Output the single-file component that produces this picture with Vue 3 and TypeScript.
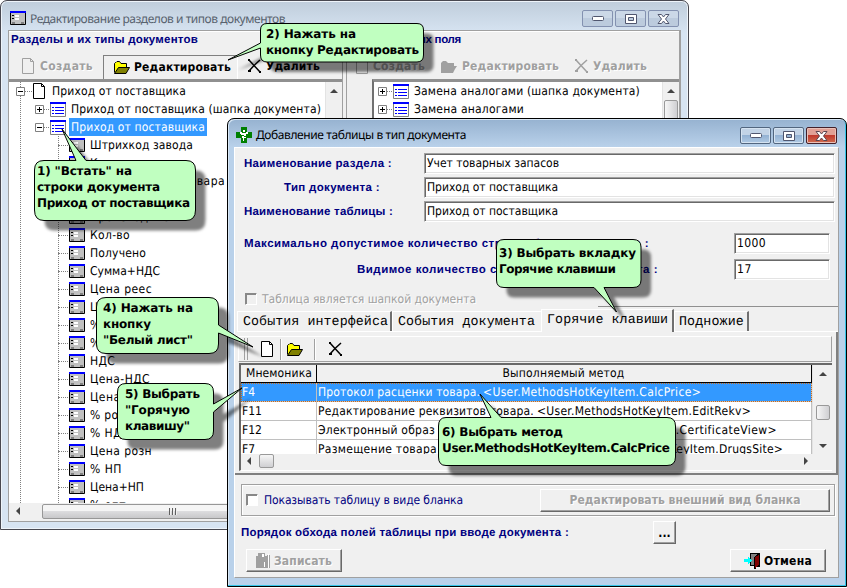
<script setup lang="ts">
interface TreeNode {
  text: string;
  level: number;
  icon: "page" | "list" | "form";
  width: number;
  sign?: "plus" | "minus";
  selected?: boolean;
}

interface CalloutLine {
  text: string;
  x: number;
  y: number;
  width: number;
}

interface Callout {
  path: string;
  lines: CalloutLine[];
}

// stretches a label to the given width with letter spacing
const vFit = {
  mounted(el: HTMLElement, { value }: { value: number }) {
    if (!value) return;
    const width = el.getBoundingClientRect().width;
    const count = (el.textContent || "").length;
    el.style.letterSpacing = `${(value - width) / count}px`;
  },
};

const leaf = (text: string, width: number): TreeNode => ({ text, width, level: 2, icon: "form" });

const tree: TreeNode[] = [
  { text: "Приход от поставщика", level: 0, icon: "page", width: 134, sign: "minus" },
  { text: "Приход от поставщика (шапка документа)", level: 1, icon: "list", width: 250, sign: "plus" },
  { text: "Приход от поставщика", level: 1, icon: "list", width: 134, sign: "minus", selected: true },
  leaf("Штрихкод завода", 103),
  leaf("Код товара", 66),
  leaf("Наименование товара", 135),
  leaf("Серия", 38),
  leaf("Производитель", 94),
  leaf("Кол-во", 40),
  leaf("Получено", 56),
  leaf("Сумма+НДС", 70),
  leaf("Цена реес", 62),
  leaf("Цена изг", 54),
  leaf("% изг", 34),
  leaf("% пост", 40),
  leaf("НДС", 25),
  leaf("Цена-НДС", 60),
  leaf("Цена опт", 56),
  leaf("% розн", 42),
  leaf("% НДС", 40),
  leaf("Цена розн", 62),
  leaf("% НП", 32),
  leaf("Цена+НП", 54),
  leaf("% опт", 36),
];

const fieldTree = [
  { text: "Замена аналогами (шапка документа)", width: 226 },
  { text: "Замена аналогами", width: 110 },
];

const fields = [
  { label: "Наименование раздела :", width: 148, value: "Учет товарных запасов", valueWidth: 132 },
  { label: "Тип документа :", width: 96, value: "Приход от поставщика", valueWidth: 131, indent: true },
  { label: "Наименование таблицы :", width: 149, value: "Приход от поставщика", valueWidth: 131 },
];

const methods = [
  { key: "F4", name: "Протокол расценки товара.", nameWidth: 162, tail: "<User.MethodsHotKeyItem.CalcPrice>", tailWidth: 218, end: 700, active: true },
  { key: "F11", name: "Редактирование реквизитов товара.", nameWidth: 216, tail: "<User.MethodsHotKeyItem.EditRekv>", tailWidth: 214, end: 750 },
  { key: "F12", name: "Электронный образ", nameWidth: 117, tail: "<User.MethodsHotKeyItem.CertificateView>", tailWidth: 256, end: 776 },
  { key: "F7", name: "Размещение товара", nameWidth: 119, tail: "<User.MethodsHotKeyItem.DrugsSite>", tailWidth: 218, end: 782 },
];

const callouts: Callout[] = [
  {
    path: "M44 160.500H76L62 129L86 160.500H186Q195.500 160.500 195.500 170V210Q195.500 220.500 186 220.500H44Q34.500 220.500 34.500 210V170Q34.500 160.500 44 160.500Z",
    lines: [
      { text: '1) "Встать" на', x: 37, y: 175, width: 95 },
      { text: "строки документа", x: 37, y: 191, width: 123 },
      { text: "Приход от поставщика", x: 37, y: 207, width: 153 },
    ],
  },
  {
    path: "M267 23.500H417Q423.500 23.500 423.500 30V55Q423.500 62 417 62H267Q260.500 62 260.500 55V48L228 60L260.500 43V30Q260.500 23.500 267 23.500Z",
    lines: [
      { text: "2) Нажать на", x: 266, y: 38, width: 90 },
      { text: "кнопку Редактировать", x: 266, y: 54, width: 153 },
    ],
  },
  {
    path: "M504 239.500H633Q641 239.500 641 247V280Q641 287.500 633 287.500H604L616.500 312L594 287.500H504Q496.500 287.500 496.500 280V247Q496.500 239.500 504 239.500Z",
    lines: [
      { text: "3) Выбрать вкладку", x: 499, y: 257, width: 137 },
      { text: "Горячие клавиши", x: 499, y: 273, width: 117 },
    ],
  },
  {
    path: "M106 297.500H209Q218.500 297.500 218.500 307V325L253 347L218.500 333V344Q218.500 353.500 209 353.500H106Q96.500 353.500 96.500 344V307Q96.500 297.500 106 297.500Z",
    lines: [
      { text: "4) Нажать на", x: 103, y: 312, width: 90 },
      { text: "кнопку", x: 103, y: 328, width: 48 },
      { text: '"Белый лист"', x: 103, y: 344, width: 90 },
    ],
  },
  {
    path: "M126 383.500H205Q213.500 383.500 213.500 392V404L242 388L213.500 412V431Q213.500 439.500 205 439.500H126Q117.500 439.500 117.500 431V392Q117.500 383.500 126 383.500Z",
    lines: [
      { text: "5) Выбрать", x: 125, y: 398, width: 75 },
      { text: '"Горячую', x: 125, y: 414, width: 65 },
      { text: 'клавишу"', x: 125, y: 430, width: 65 },
    ],
  },
  {
    path: "M446 417.500H491L480 394L501 417.500H667Q675.500 417.500 675.500 426V457Q675.500 465.500 667 465.500H446Q438.500 465.500 438.500 457V426Q438.500 417.500 446 417.500Z",
    lines: [
      { text: "6) Выбрать метод", x: 442, y: 436, width: 121 },
      { text: "User.MethodsHotKeyItem.CalcPrice", x: 442, y: 452, width: 228 },
    ],
  },
];
</script>

<template>
  <div class="desktop">
    <svg class="symbols" width="0" height="0" shape-rendering="crispEdges">
      <symbol id="page" viewBox="0 0 12 16">
        <path d="M.5.500H8.500L11.500 3.500V15.500H.5Z" fill="#fff" stroke="#000" />
        <path d="M8.500.5V3.500H11.500" fill="none" stroke="#000" />
      </symbol>
      <symbol id="page-off" viewBox="0 0 12 16">
        <path d="M.5.500H8.500L11.500 3.500V15.500H.5Z" fill="none" stroke="#a0a0a0" />
        <path d="M8.500.5V3.500H11.500" fill="none" stroke="#a0a0a0" />
      </symbol>
      <symbol id="folder" viewBox="0 0 16 13">
        <path d="M.5 11.500V2.500L1.500 1.500H2L3 .5H5.500L7 2.500H12.500V6" fill="#ff0" stroke="#000" />
        <path d="M.5 12.500L4.500 6.500H15.500L12 12.500Z" fill="#808000" stroke="#000" />
      </symbol>
      <symbol id="folder-off" viewBox="0 0 16 13">
        <path d="M0 12V3L2 1H5L7 3H13V6H16L14 9L12 13H0Z" fill="#a0a0a0" />
      </symbol>
      <symbol id="cross" viewBox="0 0 13 14">
        <path d="M1 1L6 6.500L12 13M12 1L6 6.500L1 12" fill="none" stroke="currentColor" stroke-width="1.500" shape-rendering="auto" />
        <path d="M0 11H3V13H0ZM0 0H2V2H0ZM11 12H13V14H11Z" fill="currentColor" />
      </symbol>
      <symbol id="list" viewBox="0 0 16 15">
        <path d="M.5.500H15.500V14.500H.5Z" fill="#fff" stroke="#808080" />
        <path d="M0 0H16V2H0ZM2 5H4V6H2ZM5 5H14V6H5ZM2 8H4V9H2ZM5 8H14V9H5ZM2 11H4V12H2ZM5 11H14V12H5Z" fill="#00f" />
      </symbol>
      <symbol id="form" viewBox="0 0 16 14">
        <path d="M.5.500H15.500V13.500H.5Z" fill="#c0c0c0" stroke="#000" />
        <path d="M0 0H16V2H0Z" fill="#00f" />
        <path d="M2 4H4V5H2ZM2 7H4V8H2Z" fill="#000" />
        <path d="M5 4H9V6H5ZM5 7H9V9H5Z" fill="#fff" />
        <path d="M2 11H5V13H2ZM11 11H14V13H11Z" fill="#808080" />
      </symbol>
      <symbol id="plus" viewBox="0 0 9 9">
        <path d="M.5.500H8.500V8.500H.5Z" fill="#fff" stroke="#808080" />
        <path d="M2 4H7V5H2ZM4 2H5V7H4Z" fill="#000" />
      </symbol>
      <symbol id="minus" viewBox="0 0 9 9">
        <path d="M.5.500H8.500V8.500H.5Z" fill="#fff" stroke="#808080" />
        <path d="M2 4H7V5H2Z" fill="#000" />
      </symbol>
    </svg>

    <section class="window back">
      <header class="titlebar">
        <svg class="title-icon" width="16" height="14"><use href="#form" /></svg>
        <span v-fit="255" class="title">Редактирование разделов и типов документов</span>
        <div class="controls">
          <i><svg width="12" height="6"><rect x=".5" y=".5" width="11" height="4" rx="1" fill="#fff" stroke="#50566e" /></svg></i>
          <i><svg width="12" height="10"><path d="M.5.500H11.500V9.500H.5ZM3.500 3.500V6.500H8.500V3.500Z" fill="#fff" fill-rule="evenodd" stroke="#50566e" /></svg></i>
          <i><svg width="13" height="10"><path d="M1 .5H4.500L6.500 3L8.500.5H12L8.500 5L12 9.500H8.500L6.500 7L4.500 9.500H1L4.500 5Z" fill="#fff" stroke="#50566e" /></svg></i>
        </div>
      </header>
      <div class="sections">
        <div class="pane">
          <div class="pane-title"><span v-fit="187">Разделы и их типы документов</span></div>
          <div class="toolbar">
            <span class="tool off">
              <svg width="12" height="16"><use href="#page-off" /></svg>
              <b v-fit="53">Создать</b>
            </span>
            <span class="tool pressed">
              <svg width="16" height="13"><use href="#folder" /></svg>
              <b v-fit="97">Редактировать</b>
            </span>
            <span class="tool remove">
              <svg width="13" height="14"><use href="#cross" /></svg>
              <b v-fit="54">Удалить</b>
            </span>
          </div>
          <div class="tree-box">
            <div class="tree">
              <div v-for="(node, index) in tree" :key="index" class="node" :class="['level-' + node.level]">
                <svg v-if="node.sign" class="sign" width="9" height="9"><use :href="'#' + node.sign" /></svg>
                <span class="branch"></span>
                <svg v-if="node.icon === 'page'" width="12" height="16"><use href="#page" /></svg>
                <svg v-else-if="node.icon === 'list'" width="16" height="15"><use href="#list" /></svg>
                <svg v-else width="16" height="14"><use href="#form" /></svg>
                <span class="node-text" :class="{ selected: node.selected }"><span v-fit="node.width">{{ node.text }}</span></span>
              </div>
            </div>
            <div class="vscroll"><span class="arrow-up"></span></div>
          </div>
          <div class="hscroll">
            <span class="arrow-left"></span>
            <span class="thumb"><i></i><i></i><i></i></span>
          </div>
        </div>
        <div class="pane right">
          <div class="pane-title"><span v-fit="111">Элементы и их поля</span></div>
          <div class="toolbar">
            <span class="tool off">
              <svg width="12" height="16"><use href="#page-off" /></svg>
              <b v-fit="52">Создать</b>
            </span>
            <span class="tool off">
              <svg width="16" height="13"><use href="#folder-off" /></svg>
              <b v-fit="97">Редактировать</b>
            </span>
            <span class="tool off">
              <svg width="13" height="14"><use href="#cross" /></svg>
              <b v-fit="54">Удалить</b>
            </span>
          </div>
          <div class="tree-box">
            <div class="tree">
              <div v-for="node in fieldTree" :key="node.text" class="node">
                <svg class="sign" width="9" height="9"><use href="#plus" /></svg>
                <span class="branch"></span>
                <svg width="16" height="15"><use href="#list" /></svg>
                <span class="node-text"><span v-fit="node.width">{{ node.text }}</span></span>
              </div>
            </div>
            <div class="vscroll"><span class="arrow-up"></span><span class="vthumb"></span></div>
          </div>
        </div>
      </div>
    </section>

    <section class="window front">
      <header class="titlebar">
        <svg class="title-icon" width="16" height="16" shape-rendering="crispEdges">
          <path d="M5 0H11V5H16V11H11V16H5V11H0V5H5Z" fill="#008000" />
          <path d="M4 5H6V6H10V5H12V7H10V9H8V10H10V11H8V14H7V11H6V9H8V8H5V7H4ZM7 3H9V5H7Z" fill="#fff" />
        </svg>
        <span v-fit="210" class="title">Добавление таблицы в тип документа</span>
        <div class="controls">
          <i><svg width="12" height="6"><rect x=".5" y=".5" width="11" height="4" rx="1" fill="#fff" stroke="#50566e" /></svg></i>
          <i><svg width="12" height="10"><path d="M.5.500H11.500V9.500H.5ZM3.500 3.500V6.500H8.500V3.500Z" fill="#fff" fill-rule="evenodd" stroke="#50566e" /></svg></i>
          <i class="close"><svg width="13" height="10"><path d="M1 .5H4.500L6.500 3L8.500.5H12L8.500 5L12 9.500H8.500L6.500 7L4.500 9.500H1L4.500 5Z" fill="#fff" stroke="#5c4650" /></svg></i>
        </div>
      </header>
      <div class="form">
        <div v-for="field in fields" :key="field.label" class="field">
          <label :class="{ indent: field.indent }"><span v-fit="field.width">{{ field.label }}</span></label>
          <div class="input"><span v-fit="field.valueWidth">{{ field.value }}</span></div>
        </div>
        <div class="field count">
          <label><span v-fit="405">Максимально допустимое количество строк таблицы документа :</span></label>
          <div class="input"><span v-fit="29">1000</span></div>
        </div>
        <div class="field visible-count">
          <label><span v-fit="301">Видимое количество строк таблицы документа :</span></label>
          <div class="input"><span v-fit="15">17</span></div>
        </div>
        <div class="head-check">
          <span class="checkbox"></span>
          <span v-fit="214">Таблица является шапкой документа</span>
        </div>

        <div class="tabs">
          <span class="tab"><span v-fit="145">События интерфейса</span></span>
          <span class="tab second"><span v-fit="137">События документа</span></span>
          <span class="tab current"><span v-fit="121">Горячие клавиши</span></span>
          <span class="tab last"><span v-fit="65">Подножие</span></span>
        </div>
        <div class="tab-page">
          <div class="page-tools">
            <i class="grip"></i>
            <svg width="12" height="16"><use href="#page" /></svg>
            <i class="divider"></i>
            <svg width="16" height="13"><use href="#folder" /></svg>
            <i class="divider wide"></i>
            <svg width="13" height="14"><use href="#cross" /></svg>
          </div>
          <div class="grid-box">
            <div class="grid">
              <div class="grid-row grid-head">
                <div class="key"><span v-fit="66">Мнемоника</span></div>
                <div class="method"><span v-fit="122">Выполняемый метод</span></div>
              </div>
              <div v-for="row in methods" :key="row.key" class="grid-row" :class="{ active: row.active }">
                <div class="key">{{ row.key }}</div>
                <div class="method" :style="{ paddingRight: 810 - row.end + 'px' }">
                  <span v-fit="row.nameWidth">{{ row.name }}</span>
                  <span v-fit="row.tailWidth">{{ row.tail }}</span>
                </div>
              </div>
            </div>
            <div class="vscroll grid-scroll">
              <span class="arrow-up"></span>
              <span class="vthumb"></span>
              <span class="arrow-down"></span>
            </div>
          </div>
          <div class="grid-hscroll">
            <span class="arrow-left"></span>
            <span class="hthumb"></span>
            <span class="arrow-right"></span>
          </div>
        </div>

        <div class="blank-group">
          <span class="checkbox"></span>
          <span v-fit="199" class="blank-label">Показывать таблицу в виде бланка</span>
          <button class="btn off"><b v-fit="231">Редактировать внешний вид бланка</b></button>
        </div>
        <div class="order">
          <span v-fit="328">Порядок обхода полей таблицы при вводе документа :</span>
          <button class="btn"><b>...</b></button>
        </div>
        <div class="actions">
          <button class="btn off save">
            <svg width="14" height="15" shape-rendering="crispEdges">
              <path d="M0 3H2V0H9V3H11V15H0Z" fill="#a0a0a0" />
              <path d="M6 1H8V4H6ZM8 9H9V14H8ZM12 1H13V15H12Z" fill="#fff" />
              <path d="M11 2H12V15H11ZM13 2H14V15H13Z" fill="#a0a0a0" />
            </svg>
            <b v-fit="58">Записать</b>
          </button>
          <button class="btn cancel">
            <svg width="16" height="16" shape-rendering="crispEdges">
              <path d="M6 0H16V14H12V16H10V13H6Z" fill="#000" />
              <path d="M7 1H14L10 4V12H7Z" fill="#808080" />
              <path d="M11 4L15 2V12L11 15Z" fill="#800000" />
              <path d="M0 6H4V4L8 8L4 11V9H0Z" fill="#0ff" />
            </svg>
            <b v-fit="48">Отмена</b>
          </button>
        </div>
      </div>
    </section>

    <svg class="callouts" width="847" height="588">
      <defs>
        <filter id="soft" x="-20%" y="-20%" width="140%" height="140%">
          <feGaussianBlur stdDeviation="1.600" />
        </filter>
      </defs>
      <g v-for="(callout, index) in callouts" :key="index">
        <path :d="callout.path" transform="translate(10 10)" fill="#000" fill-opacity=".5" filter="url(#soft)" />
        <path :d="callout.path" fill="#c0ffc0" stroke="#000" />
        <text
          v-for="line in callout.lines"
          :key="line.text"
          :x="line.x"
          :y="line.y"
          :textLength="line.width"
        >{{ line.text }}</text>
      </g>
    </svg>
  </div>
</template>

<style>
body {
  margin: 0;
  background: #fff;
}
</style>

<style scoped>
.desktop {
  position: relative;
  width: 847px;
  height: 588px;
  overflow: hidden;
  font: 12px/16px "DejaVu Sans Condensed", "DejaVu Sans", sans-serif;
  color: #000;
  white-space: nowrap;
  text-rendering: geometricPrecision;
}

.desktop * {
  box-sizing: border-box;
}

.desktop span,
.desktop svg,
.desktop i,
.desktop b {
  flex: none;
}

.symbols,
.callouts {
  position: absolute;
  top: 0;
  left: 0;
}

.callouts text {
  font: bold 12px "DejaVu Sans", sans-serif;
}

.window {
  position: absolute;
  display: flex;
  flex-direction: column;
}

.back {
  left: 0;
  top: 0;
  width: 689px;
  height: 530px;
  padding: 0 7px 7px;
  border: 1px solid #484850;
  border-radius: 7px 7px 0 0;
  background: linear-gradient(#bfcddb, #d7e4f2 32px);
  box-shadow: inset 0 0 0 1px #eef4fa;
}

.front {
  left: 227px;
  top: 118px;
  width: 620px;
  height: 469px;
  padding: 0 7px 8px 6px;
  border: 1px solid #000;
  border-radius: 7px 7px 0 0;
  background: linear-gradient(#96b2d0, #b9d1ea 28px);
  box-shadow: inset -1px -1px 0 #35c5e8, inset 1px 1px 0 #d9e8f6;
}

.titlebar {
  display: flex;
  align-items: flex-start;
  height: 29px;
  padding: 10px 2px 0 2px;
  flex: none;
}

.front .titlebar {
  height: 28px;
  padding: 8px 2px 0 2px;
}

.title {
  margin: 0 0 0 4px;
  font: 12px/16px "Noto Sans", "Open Sans", sans-serif;
  color: #58626e;
}

.front .title {
  color: #000;
}

.controls {
  display: flex;
  gap: 2px;
  margin: -1px 0 0 auto;
}

.front .controls {
  margin-top: 0;
}

.controls i {
  display: flex;
  align-items: center;
  justify-content: center;
  width: 31px;
  height: 17px;
  border: 1px solid #8391b0;
  border-radius: 2px;
  background: linear-gradient(#cbd8e7 50%, #bccbdd 50%);
}

.front .controls i {
  border-color: #52667f;
  background: linear-gradient(#c2d3e6 50%, #94b2d3 50%, #b0cae4);
  box-shadow: inset 0 0 0 1px #d5e3f1;
}

.front .controls .close {
  border-color: #43202a;
  background: linear-gradient(#e1a095 45%, #c0392c 50%, #cf6d50);
  box-shadow: inset 0 0 0 1px #eac0b8;
}

.sections {
  display: flex;
  flex: 1;
  min-height: 0;
  border: 1px solid #a0a0a0;
  background: #f0f0f0;
}

.pane {
  display: flex;
  flex-direction: column;
  width: 334px;
  flex: none;
  border-right: 1px solid #a0a0a0;
}

.pane.right {
  width: 334px;
  margin-left: 3px;
  border-left: 1px solid #a0a0a0;
}

.pane-title,
.field label,
.order {
  font: bold 11.5px/16px "Liberation Sans", Arial, sans-serif;
  color: #000080;
}

.pane-title {
  height: 24px;
  padding: 0 0 0 2px;
  border-top: 1px solid #fff;
}

.right .pane-title {
  padding-left: 3px;
}

.toolbar {
  display: flex;
  height: 24px;
  padding-left: 13px;
  flex: none;
}

.right .toolbar {
  padding-left: 9px;
}

.tool {
  display: flex;
  align-items: center;
  gap: 6px;
  padding-bottom: 2px;
}

.right .tool {
  gap: 5px;
  margin-right: 16px;
}

.tool.pressed {
  margin-left: 10px;
  width: 135px;
  padding-left: 10px;
  padding-bottom: 1px;
  gap: 4px;
  border-left: 1px solid #808080;
  border-top: 1px solid #808080;
  border-right: 1px solid #fff;
}

.tool.remove {
  gap: 5px;
  margin-left: 10px;
}

.off {
  color: #a0a0a0;
  text-shadow: 1px 1px 0 #fff;
}

.tree-box {
  display: flex;
  height: 424px;
  border-top: 3px solid #909090;
  flex: none;
}

.right .tree-box {
  margin-left: 25px;
  border-left: 2px solid #707070;
}

.tree {
  position: relative;
  flex: 1;
  overflow: hidden;
  background: #fff;
}

/* dotted guides of the tree levels */
.pane:not(.right) .tree::before,
.pane:not(.right) .tree::after {
  content: "";
  position: absolute;
  left: 11px;
  top: 0;
  width: 39px;
  height: 100%;
  border-left: 1px dotted #808080;
}

.pane:not(.right) .tree::after {
  left: 49px;
  top: 54px;
}

.node {
  display: flex;
  align-items: center;
  height: 18px;
  padding-left: 7px;
}

.node.level-1 {
  padding-left: 26px;
}

.node.level-2 {
  padding-left: 49px;
}

.sign {
  position: relative;
  z-index: 1;
}

.branch {
  width: 6px;
  margin-right: 1px;
  border-top: 1px dotted #808080;
}

.level-0 .branch {
  width: 7px;
}

.level-1 .branch {
  width: 5px;
}

.level-2 .branch {
  width: 10px;
}

.right .node {
  padding-left: 4px;
}

.right .branch {
  width: 5px;
}

.node-text {
  height: 18px;
  margin-left: 3px;
  padding: 1px 2px;
}

.level-0 .node-text {
  margin-left: 5px;
}

.node-text.selected {
  background: #3399ff;
  color: #fff;
}

.vscroll {
  display: flex;
  flex-direction: column;
  align-items: center;
  width: 17px;
  padding-top: 7px;
  background: #f0f0f0;
  border-left: 1px solid #e3e3e3;
}

.arrow-up,
.arrow-down {
  border: 4px solid transparent;
  border-top-width: 0;
  border-bottom: 4px solid #444;
}

.arrow-down {
  border-top: 4px solid #444;
  border-bottom-width: 0;
}

.arrow-left,
.arrow-right {
  border: 4px solid transparent;
  border-left-width: 0;
  border-right: 4px solid #444;
}

.arrow-right {
  border-left: 4px solid #444;
  border-right-width: 0;
}

.vthumb {
  width: 14px;
  height: 60px;
  margin-top: 7px;
  border: 1px solid #999;
  border-radius: 2px;
  background: linear-gradient(90deg, #f6f6f6, #cfcfd2);
}

.hscroll {
  display: flex;
  align-items: center;
  height: 16px;
  padding-left: 7px;
}

.thumb {
  display: flex;
  align-items: center;
  gap: 1px;
  width: 264px;
  height: 15px;
  margin-left: 22px;
  padding-left: 126px;
  border: 1px solid #979797;
  border-radius: 2px;
  background: linear-gradient(#f5f5f5 45%, #dcdcde 50%, #c8c8ca);
}

.thumb i {
  width: 2px;
  height: 7px;
  background: #606060;
  border-right: 1px solid #eee;
}

.form {
  display: flex;
  flex-direction: column;
  flex: 1;
  padding-top: 5px;
  border: 1px solid #a0a0a0;
  border-top-color: #fff;
  border-left-color: #fff;
  background: #f0f0f0;
}

.field {
  display: flex;
  align-items: center;
  height: 21px;
  margin: 0 3px 3px 9px;
  flex: none;
}

.field label {
  width: 180px;
}

.field label.indent {
  padding-left: 40px;
}

.input {
  flex: 1;
  height: 21px;
  padding: 1px 2px;
  border: 1px solid #a0a0a0;
  border-right-color: #fff;
  border-bottom-color: #fff;
  box-shadow: inset 1px 1px 0 #696969, inset -1px -1px 0 #e3e3e3;
  background: #fff;
}

.count,
.visible-count {
  margin-top: 8px;
  margin-right: 8px;
}

.count label {
  width: 490px;
}

.visible-count {
  margin: 2px 8px 0 122px;
}

.visible-count label {
  width: 377px;
}

.head-check {
  display: flex;
  align-items: center;
  gap: 5px;
  height: 16px;
  margin: 11px 0 0 10px;
  color: #a0a0a0;
  text-shadow: 1px 1px 0 #fff;
  flex: none;
}

.head-check::after {
  content: "";
  flex: 1;
  height: 1px;
  margin: 15px 0 0 117px;
  background: #909090;
}

.checkbox {
  width: 12px;
  height: 12px;
  border: 1px solid #888;
  border-right-color: #fff;
  border-bottom-color: #fff;
  box-shadow: inset 1px 1px 0 #888;
}

.tabs {
  display: flex;
  align-items: flex-end;
  height: 25px;
  margin-left: 2px;
  border-bottom: 1px solid #fff;
  font: 13.330px/16px "Liberation Mono", "Courier New", monospace;
  flex: none;
}

.tab {
  width: 155px;
  height: 20px;
  padding: 3px 0 0 5px;
  border-top: 1px solid #fff;
  border-left: 1px solid #fff;
  border-right: 2px solid #707070;
}

.tab.second {
  width: 149px;
  border-right: 0;
}

.tab.current {
  width: 133px;
  height: 23px;
  margin-bottom: -1px;
  border-right-width: 2px;
  background: #f0f0f0;
}

.tab.last {
  width: 75px;
  padding-left: 4px;
}

.tab-page {
  height: 143px;
  padding: 4px 4px 0 3px;
  border-right: 2px solid #808080;
  border-bottom: 2px solid #808080;
  flex: none;
}

.page-tools {
  display: flex;
  align-items: center;
  height: 26px;
  border: 1px solid #fff;
  border-right-color: #a0a0a0;
  border-bottom-color: #a0a0a0;
}

.grip {
  width: 4px;
  height: 22px;
  margin: 0 13px 0 5px;
  border-left: 1px solid #a0a0a0;
  border-right: 1px solid #a0a0a0;
}

.divider {
  width: 2px;
  height: 21px;
  margin: 0 5px 0 7px;
  border-left: 1px solid #a0a0a0;
  border-right: 1px solid #fff;
}

.divider.wide {
  margin: 0 13px 0 11px;
}

.grid-box {
  display: flex;
  height: 91px;
  margin: 1px 0 0 1px;
  border-top: 2px solid #696969;
  border-left: 2px solid #696969;
}

.grid {
  width: 572px;
  overflow: hidden;
  background: #fff;
}

.grid-row {
  display: flex;
  height: 19px;
  border-bottom: 1px solid #c0c0c0;
}

.key,
.method {
  height: 18px;
  padding: 1px 2px 0 1px;
  border-right: 1px solid #c0c0c0;
}

.key {
  width: 76px;
  flex: none;
}

.method {
  display: flex;
  justify-content: space-between;
  flex: 1;
}

.active {
  background: #3399ff;
  color: #fff;
  outline: 1px dotted #c86a1c;
  outline-offset: -1px;
}

.grid-row.grid-head {
  height: 18px;
  background: #f0f0f0;
  border-bottom: 1px solid #000;
}

.grid-head .key,
.grid-head .method {
  padding-top: 0;
  border-right: 1px solid #000;
  justify-content: center;
}

.grid-head .key {
  padding-left: 5px;
}

.grid-scroll {
  width: 20px;
}

.grid-scroll .vthumb {
  height: 15px;
  flex: none;
  margin: 29px 0 24px;
}

.grid-hscroll {
  display: flex;
  align-items: center;
  height: 17px;
  margin-left: 1px;
  padding: 0 24px 2px 6px;
  border-left: 2px solid #696969;
  border-bottom: 1px solid #fff;
}

.hthumb {
  width: 15px;
  height: 14px;
  margin: 0 auto 0 8px;
  border: 1px solid #999;
  border-radius: 2px;
  background: linear-gradient(#f6f6f6, #cfcfd2);
}

.blank-group {
  display: flex;
  align-items: center;
  height: 32px;
  margin: 9px 3px 0 6px;
  padding: 0 4px;
  border: 1px solid #a0a0a0;
  box-shadow: inset 1px 1px 0 #fff, 1px 1px 0 #fff;
  flex: none;
}

.blank-group .checkbox {
  background: #fff;
}

.blank-label {
  margin-left: 6px;
  color: #000080;
}

.btn {
  display: flex;
  align-items: center;
  justify-content: center;
  height: 23px;
  padding: 0;
  border: 1px solid #fff;
  border-right-color: #696969;
  border-bottom-color: #696969;
  box-shadow: inset -1px -1px 0 #a0a0a0;
  background: #f0f0f0;
  font: bold 12px/16px "DejaVu Sans Condensed", "DejaVu Sans", sans-serif;
  color: #000;
}

.btn.off {
  color: #a0a0a0;
}

.blank-group .btn {
  width: 290px;
  margin-left: auto;
}

.order {
  display: flex;
  align-items: center;
  height: 23px;
  margin: 5px 0 0 6px;
  flex: none;
}

.order .btn {
  width: 23px;
  margin-left: 84px;
}

.actions {
  display: flex;
  justify-content: space-between;
  margin: 5px 12px 0 11px;
}

.btn.save,
.btn.cancel {
  width: 96px;
  gap: 4px;
}
</style>
